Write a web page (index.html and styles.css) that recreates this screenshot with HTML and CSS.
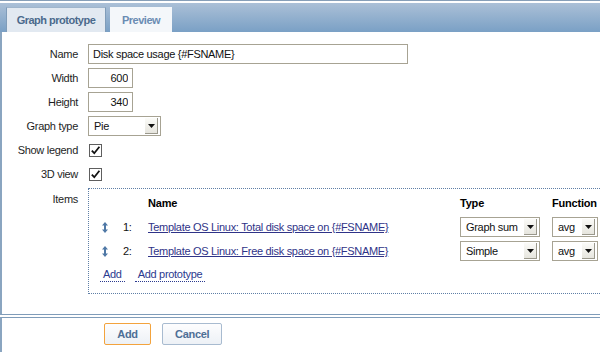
FILE: index.html
```html
<!DOCTYPE html>
<html lang="en">
<head>
  <meta charset="UTF-8">
  <title>Graph prototype</title>
  <link rel="stylesheet" href="styles.css">
</head>
<body>
  <div class="page">
    <!-- Tabs -->
    <div class="tabbar">
      <span class="tab tab-active">Graph prototype</span>
      <span class="tab">Preview</span>
    </div>

    <!-- Form -->
    <div class="form-body">
      <div class="form-grid">
        <label class="form-label">Name</label>
        <div class="form-field"><input type="text" class="text-input input-name" value="Disk space usage {#FSNAME}"></div>

        <label class="form-label">Width</label>
        <div class="form-field"><input type="text" class="text-input input-num" value="600"></div>

        <label class="form-label">Height</label>
        <div class="form-field"><input type="text" class="text-input input-num" value="340"></div>

        <label class="form-label">Graph type</label>
        <div class="form-field">
          <div class="select select-graph"><span class="select-text">Pie</span><span class="select-arrow"><svg width="7" height="4" viewBox="0 0 7 4"><path d="M0 0H7L3.5 4Z" fill="#111"/></svg></span></div>
        </div>

        <label class="form-label">Show legend</label>
        <div class="form-field">
          <span class="checkbox"><svg width="11" height="11" viewBox="0 0 11 11"><path d="M1.8 5.6 L4.3 8.2 L9.4 1.8" fill="none" stroke="#111" stroke-width="1.8"/></svg></span>
        </div>

        <label class="form-label">3D view</label>
        <div class="form-field">
          <span class="checkbox"><svg width="11" height="11" viewBox="0 0 11 11"><path d="M1.8 5.6 L4.3 8.2 L9.4 1.8" fill="none" stroke="#111" stroke-width="1.8"/></svg></span>
        </div>

        <label class="form-label label-top">Items</label>
        <div class="form-field">
          <div class="items-box">
            <div class="items-grid">
              <span></span><span></span>
              <span class="items-head">Name</span>
              <span class="items-head">Type</span>
              <span class="items-head">Function</span>

              <span class="drag"><svg width="6" height="11" viewBox="0 0 6 11"><path d="M3 0L6 3.6H4V7.4H6L3 11L0 7.4H2V3.6H0Z" fill="#4f78a6"/></svg></span>
              <span class="item-num">1:</span>
              <a class="item-link" href="#">Template OS Linux: Total disk space on {#FSNAME}</a>
              <div class="select select-type"><span class="select-text">Graph sum</span><span class="select-arrow"><svg width="7" height="4" viewBox="0 0 7 4"><path d="M0 0H7L3.5 4Z" fill="#111"/></svg></span></div>
              <div class="select select-func"><span class="select-text">avg</span><span class="select-arrow"><svg width="7" height="4" viewBox="0 0 7 4"><path d="M0 0H7L3.5 4Z" fill="#111"/></svg></span></div>

              <span class="drag"><svg width="6" height="11" viewBox="0 0 6 11"><path d="M3 0L6 3.6H4V7.4H6L3 11L0 7.4H2V3.6H0Z" fill="#4f78a6"/></svg></span>
              <span class="item-num">2:</span>
              <a class="item-link" href="#">Template OS Linux: Free disk space on {#FSNAME}</a>
              <div class="select select-type"><span class="select-text">Simple</span><span class="select-arrow"><svg width="7" height="4" viewBox="0 0 7 4"><path d="M0 0H7L3.5 4Z" fill="#111"/></svg></span></div>
              <div class="select select-func"><span class="select-text">avg</span><span class="select-arrow"><svg width="7" height="4" viewBox="0 0 7 4"><path d="M0 0H7L3.5 4Z" fill="#111"/></svg></span></div>
            </div>
            <div class="items-actions">
              <a class="dotted-link" href="#">Add</a>
              <a class="dotted-link" href="#">Add prototype</a>
            </div>
          </div>
        </div>
      </div>
    </div>

    <!-- Footer buttons -->
    <div class="form-footer">
      <button class="btn btn-main">Add</button>
      <button class="btn">Cancel</button>
    </div>
  </div>
</body>
</html>
```

FILE: styles.css
```css
* {
  box-sizing: border-box;
}
html, body {
  margin: 0;
  padding: 0;
  overflow: hidden;
}
body {
  width: 600px;
  height: 352px;
  background-color: #eef2f6;
  color: #1e1e1e;
  font-family: 'Liberation Sans', Arial, sans-serif;
  font-size: 11px;
  letter-spacing: -0.3px;
}
.page {
  border-top: 1px solid #879fb8;
  padding-top: 2px;
  background-color: #fff;
}
/* --- Tabs --- */
.tabbar {
  display: flex;
  align-items: flex-end;
  gap: 4px;
  height: 29px;
  padding-left: 6px;
  background: linear-gradient(#abc0d7, #7aa0c5);
}
.tab {
  display: flex;
  align-items: center;
  justify-content: center;
  height: 25px;
  padding: 0 12px;
  white-space: nowrap;
  background-color: #f4f7fa;
  color: #6a8cb3;
  font-weight: bold;
  letter-spacing: -0.5px;
}
.tab-active {
  width: 100px;
  padding: 0;
  background-color: #e2e9f1;
  color: #4b6a8c;
  border-left: 1px solid #7f9cb9;
  border-right: 1px solid #7f9cb9;
  border-top: 1px solid #9fb5cc;
}
/* --- Form --- */
.form-body {
  height: 283px;
  padding: 12px 0 0;
  border-left: 2px solid #8aa5c0;
  border-bottom: 1px solid #7f9cb9;
  background-color: #fff;
}
.form-grid {
  display: grid;
  grid-template-columns: 76px 540px;
  grid-auto-rows: minmax(20px, auto);
  column-gap: 10px;
  row-gap: 4px;
}
.form-label {
  display: flex;
  align-items: center;
  justify-content: flex-end;
  height: 20px;
}
.label-top {
  margin-top: 1px;
}
.form-field {
  display: flex;
  align-items: center;
}
.text-input {
  height: 20px;
  padding: 0 4px;
  border: 1px solid #a7a393;
  font-family: inherit;
  font-size: 11px;
  letter-spacing: -0.3px;
  color: #111;
  background-color: #fff;
  outline: none;
}
.input-name {
  width: 320px;
}
.input-num {
  width: 45px;
  text-align: right;
}
/* --- Fake select --- */
.select {
  display: flex;
  align-items: center;
  justify-content: space-between;
  height: 20px;
  padding: 0 2px 0 5px;
  border: 1px solid #a7a393;
  background-color: #fff;
  color: #111;
}
.select-arrow {
  display: flex;
  align-items: center;
  justify-content: center;
  width: 13px;
  height: 16px;
  background: linear-gradient(#fbfbf8, #e6e5de);
  border-right: 1px solid #9a988c;
  border-bottom: 1px solid #9a988c;
}
.select-graph {
  width: 73px;
}
.select-type {
  width: 80px;
}
.select-func {
  width: 46px;
}
.checkbox {
  display: flex;
  align-items: center;
  justify-content: center;
  width: 13px;
  height: 13px;
  margin-left: 1px;
  border: 1px solid #5e5e5e;
  background-color: #fff;
}
/* --- Items --- */
.items-box {
  width: 540px;
  height: 106px;
  padding-top: 4px;
  border: 1px dotted #5f7fa6;
}
.items-grid {
  display: grid;
  grid-template-columns: 30px 29px 312px 92px 60px;
  grid-auto-rows: 20px;
  row-gap: 4px;
  align-items: center;
}
.items-head {
  font-weight: bold;
  color: #000;
  letter-spacing: -0.2px;
}
.drag {
  display: flex;
  justify-content: center;
  padding-left: 2px;
}
.item-num {
  padding-left: 4px;
  color: #111;
}
.item-link {
  color: #2f3388;
}
.items-actions {
  display: flex;
  gap: 10px;
  margin: 7px 0 0 11px;
}
.dotted-link {
  padding: 0 3px 1px;
  color: #2b3a8f;
  text-decoration: none;
  border-bottom: 1px dotted #2b3a8f;
}
/* --- Footer --- */
.form-footer {
  display: flex;
  gap: 11px;
  height: 37px;
  margin-top: 2px;
  padding: 5px 0 0 102px;
  border-top: 1px solid #7f9cb9;
  border-left: 2px solid #8aa5c0;
  background-color: #fff;
}
.btn {
  height: 22px;
  padding: 0 12px;
  border: 1px solid #a8bbd0;
  border-radius: 2px;
  background: linear-gradient(#fdfdfe, #edf1f6);
  color: #4e6f96;
  font-family: inherit;
  font-size: 11px;
  font-weight: bold;
  letter-spacing: -0.3px;
}
.btn-main {
  width: 47px;
  border-color: #f3a33d;
}
```
